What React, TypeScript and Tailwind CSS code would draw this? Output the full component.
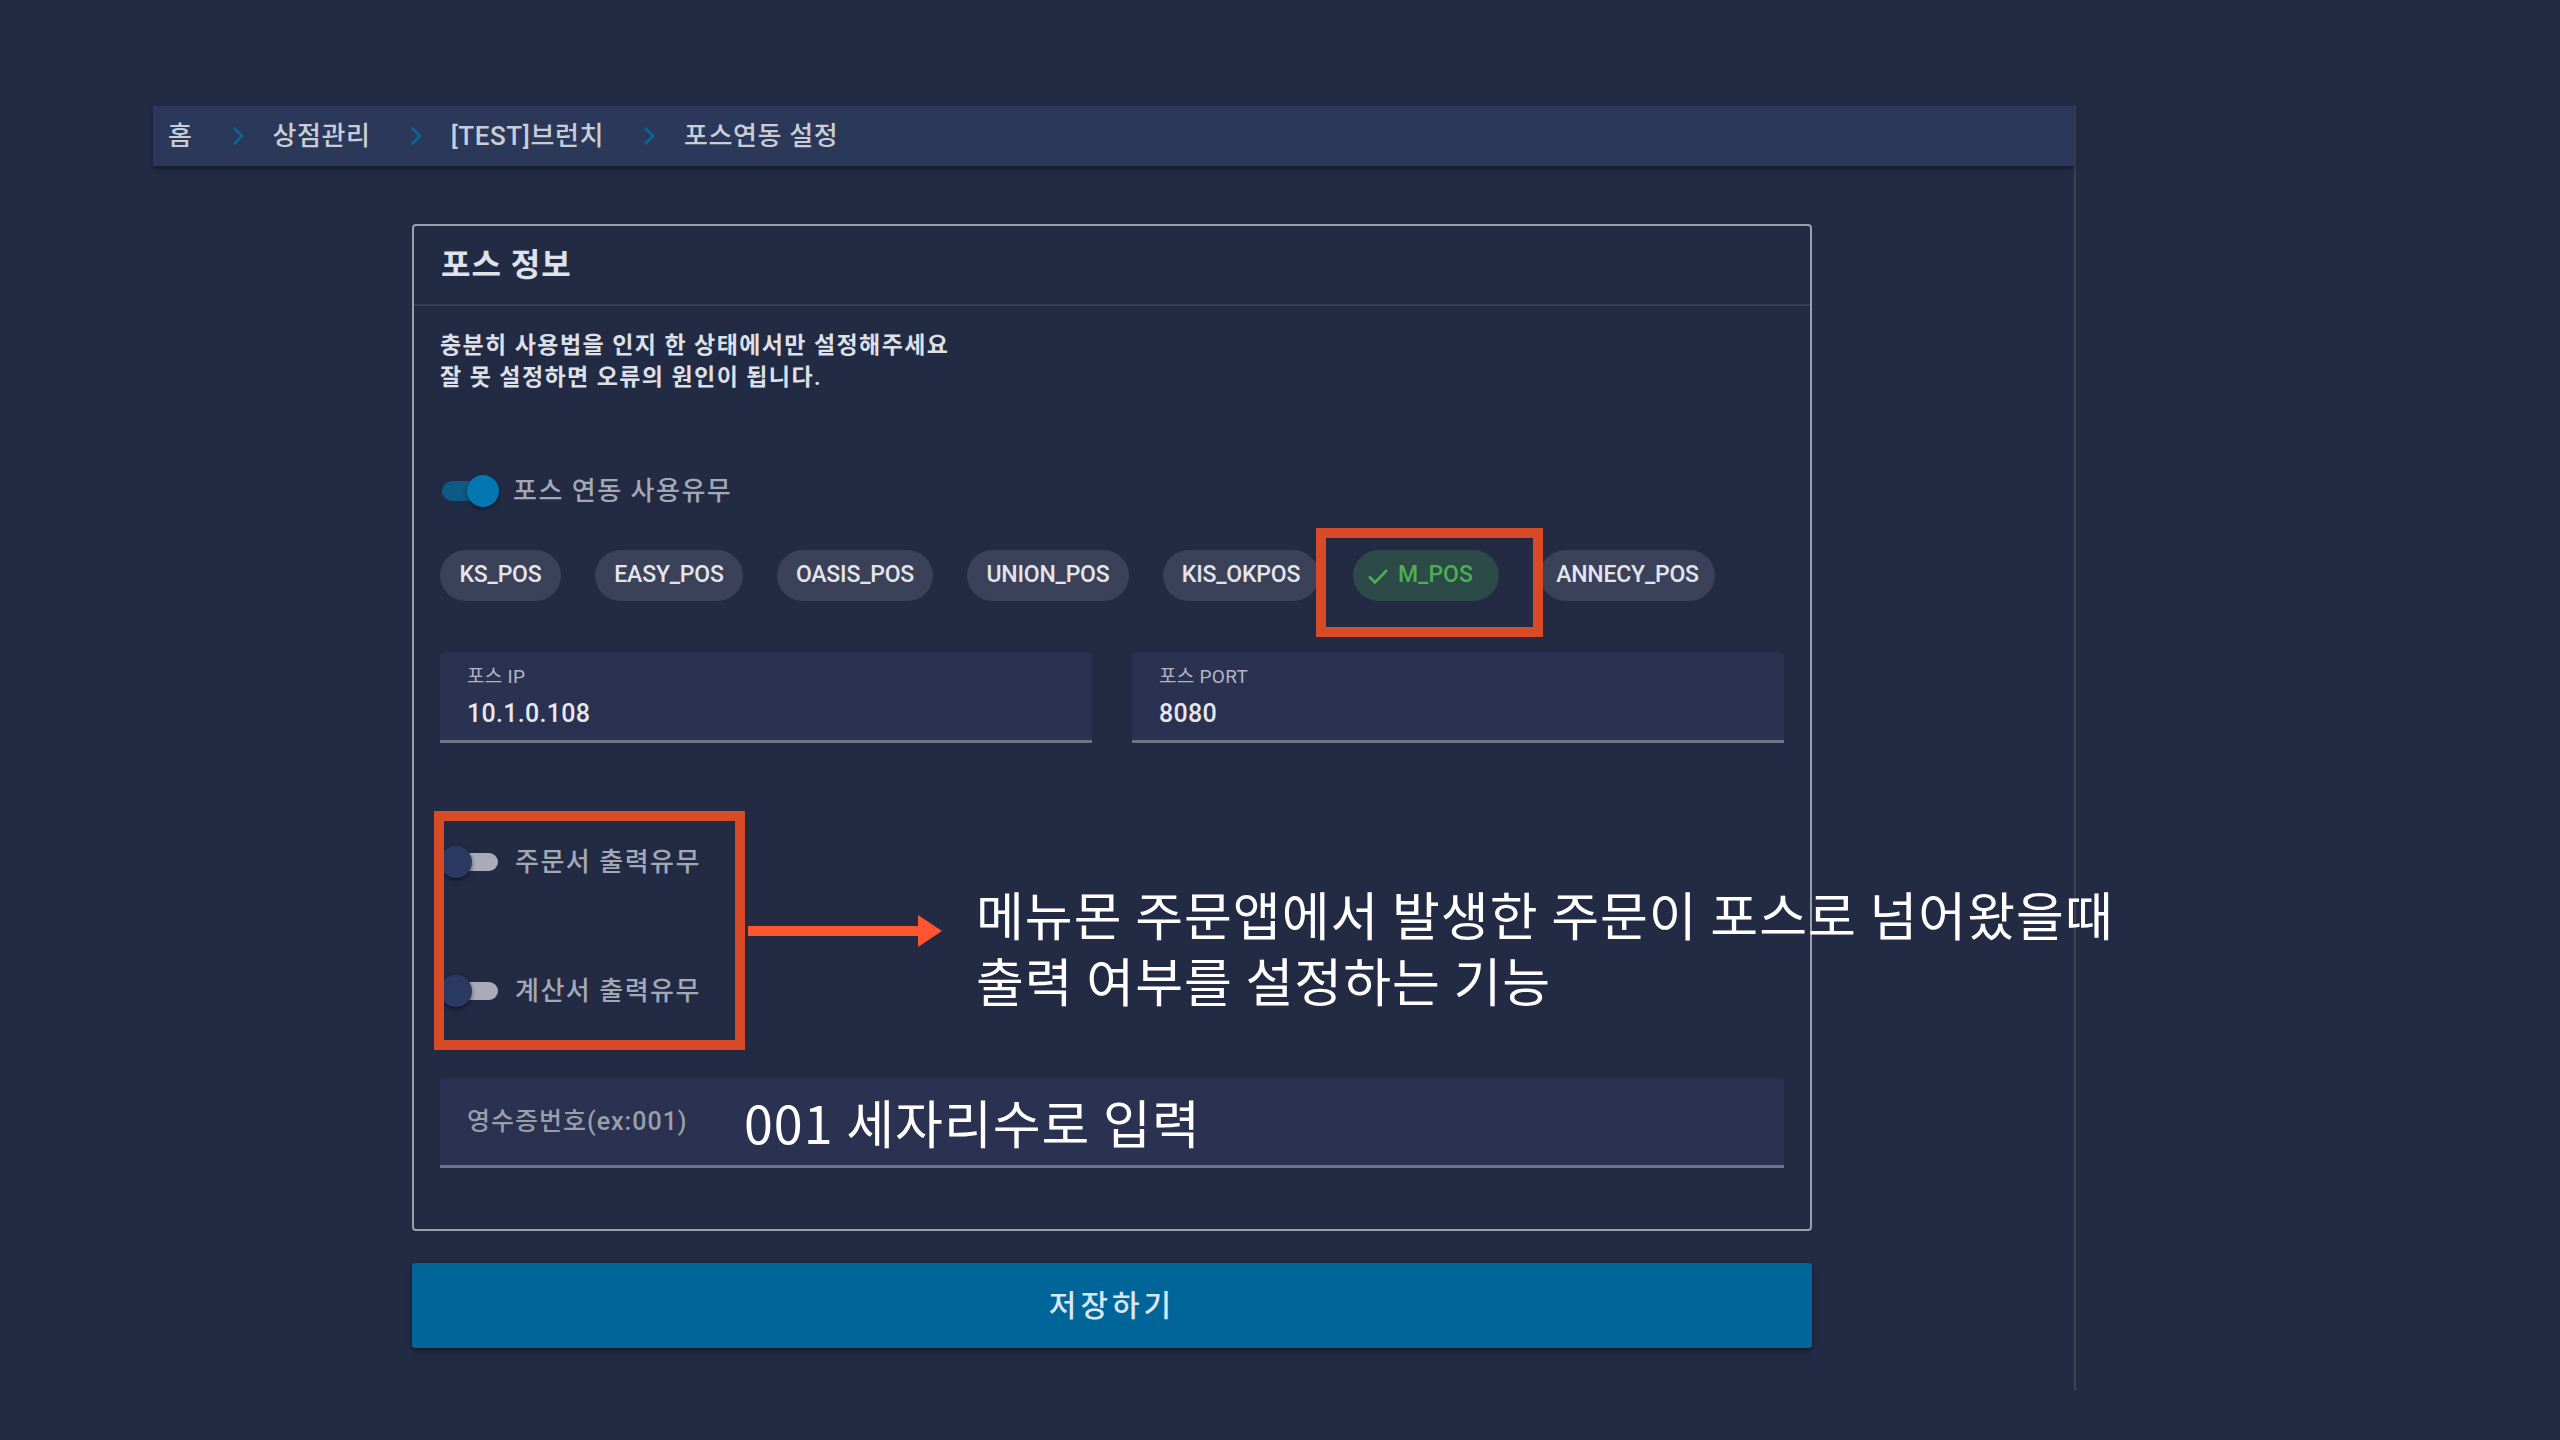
import React from "react";

const FONT = { fontFamily: 'Roboto, "Noto Sans CJK KR", sans-serif' };
const ANNO = { fontFamily: '"Noto Sans CJK KR", "Noto Sans", sans-serif' };

const crumbs = ["홈", "상점관리", "[TEST]브런치", "포스연동 설정"];

// chip widths read off the screenshot
const posList: { name: string; w: string }[] = [
  { name: "KS_POS", w: "w-[121px]" },
  { name: "EASY_POS", w: "w-[148px]" },
  { name: "OASIS_POS", w: "w-[156px]" },
  { name: "UNION_POS", w: "w-[162px]" },
  { name: "KIS_OKPOS", w: "w-[156px]" },
  { name: "M_POS", w: "w-[146px]" },
  { name: "ANNECY_POS", w: "w-[175px] ml-[7px]" },
];

function Chevron() {
  return (
    <svg width="14" height="22" viewBox="0 0 14 22" className="ml-[38px] mr-[28px]">
      <path d="M3 3 L11 11 L3 19" fill="none" stroke="#0a6796" strokeWidth="2.6" />
    </svg>
  );
}

function Toggle({ on }: { on: boolean }) {
  return (
    <div className="relative h-[34px] w-[62px] shrink-0">
      {on ? (
        <>
          <div className="absolute left-[2px] top-[7px] h-[20px] w-[52px] rounded-full bg-[#0c5a85]" />
          <div className="absolute left-[27px] top-[1px] h-[32px] w-[32px] rounded-full bg-[#0277b0] shadow-[0_2px_4px_rgba(0,0,0,0.45)]" />
        </>
      ) : (
        <>
          <div className="absolute left-[6px] top-[8px] h-[18px] w-[52px] rounded-full bg-[#a8abb8]" />
          <div className="absolute left-[0px] top-[1px] h-[32px] w-[32px] rounded-full bg-[#2b3a62] shadow-[0_2px_4px_rgba(0,0,0,0.5)]" />
        </>
      )}
    </div>
  );
}

function Field({ label, value }: { label: string; value: string }) {
  return (
    <div className="flex h-[91px] flex-col justify-center rounded-t-[4px] border-b-[3px] border-[#6f7485] bg-[#2b3150] pl-[27px] pt-[2px]">
      <span className="text-[19px] leading-[22px] tracking-[0.3px] text-[#b3b6c2]">{label}</span>
      <span className="mt-[12px] text-[25px] font-medium leading-[28px] tracking-[0.3px] text-[#e6e8ee]">{value}</span>
    </div>
  );
}

export default function App() {
  return (
    <div className="relative h-[1440px] w-[2560px] overflow-hidden bg-[#232a44]" style={FONT}>
      <div className="ml-[153px] mt-[106px] h-[1284px] w-[1923px] border-r-2 border-[#3c4152]">
        {/* breadcrumb */}
        <div className="flex h-[60px] items-center bg-[#2c3859] pl-[15px] text-[26px] font-medium tracking-[0.6px] text-[#c9cdd6] shadow-[0_3px_4px_rgba(0,0,0,0.35)]">
          {crumbs.map((c, i) => (
            <React.Fragment key={c}>
              {i > 0 && <Chevron />}
              <span>{c}</span>
            </React.Fragment>
          ))}
        </div>

        <div className="ml-[259px] mt-[58px] w-[1400px]">
          {/* card */}
          <div className="rounded-[4px] border-2 border-[#9ba0ad]">
            <div className="flex h-[80px] items-center border-b-2 border-[#363d57] pl-[27px] text-[32px] font-semibold tracking-[1px] text-[#dfe2e9]">
              포스 정보
            </div>
            <div className="flex flex-col px-[26px] pb-[61px] pt-[24px]">
              <p className="text-[23px] font-semibold leading-[32px] tracking-[1.4px] text-[#dde0e7]">
                충분히 사용법을 인지 한 상태에서만 설정해주세요
                <br />
                잘 못 설정하면 오류의 원인이 됩니다.
              </p>

              <div className="mt-[77px] flex h-[40px] items-center gap-[11px]">
                <Toggle on />
                <span className="text-[26px] font-medium tracking-[1.5px] text-[#a3a8b5]">포스 연동 사용유무</span>
              </div>

              <div className="mt-[39px] flex gap-[34px]">
                {posList.map(({ name, w }) =>
                  name === "M_POS" ? (
                    <div key={name} className={`flex h-[51px] items-center gap-[8px] rounded-full bg-[#2b4a48] pl-[13px] text-[23px] font-medium text-[#4caf50] ${w}`}>
                      <svg width="24" height="24" viewBox="0 0 24 24">
                        <path d="M3 12.5 L9 18.5 L21 6" fill="none" stroke="#4caf50" strokeWidth="2.6" />
                      </svg>
                      {name}
                    </div>
                  ) : (
                    <div key={name} className={`flex h-[51px] items-center justify-center whitespace-nowrap rounded-full bg-[#3b4159] text-[23px] font-medium tracking-[-0.2px] text-[#e3e5eb] ${w}`}>
                      {name}
                    </div>
                  )
                )}
              </div>

              <div className="mt-[51px] grid grid-cols-2 gap-[40px]">
                <Field label="포스 IP" value="10.1.0.108" />
                <Field label="포스 PORT" value="8080" />
              </div>

              <div className="mt-[99px] flex h-[40px] items-center gap-[13px]">
                <Toggle on={false} />
                <span className="text-[26px] font-medium tracking-[1.5px] text-[#a3a8b5]">주문서 출력유무</span>
              </div>
              <div className="mt-[89px] flex h-[40px] items-center gap-[13px]">
                <Toggle on={false} />
                <span className="text-[26px] font-medium tracking-[1.5px] text-[#a3a8b5]">계산서 출력유무</span>
              </div>

              <div className="mt-[67px] flex h-[90px] items-center rounded-t-[4px] border-b-[3px] border-[#6f7485] bg-[#2b3150] pl-[27px]">
                <span className="w-[277px] text-[25px] font-medium tracking-[1px] text-[#9a9eab]">영수증번호(ex:001)</span>
                <span className="text-[52px] leading-none tracking-[1px] text-white" style={ANNO}>
                  001 세자리수로 입력
                </span>
              </div>
            </div>
          </div>

          <button className="mt-[32px] flex h-[85px] w-full items-center justify-center rounded-[3px] bg-[#00669a] text-[30px] font-medium tracking-[4px] text-[#d8e6f1] shadow-[0_3px_5px_rgba(0,0,0,0.4)]">
            저장하기
          </button>
        </div>
      </div>

      {/* annotations */}
      <div className="absolute left-[1316px] top-[528px] h-[109px] w-[227px] border-[10px] border-[#d94a26]" />
      <div className="absolute left-[434px] top-[811px] h-[239px] w-[311px] border-[10px] border-[#d94a26]" />
      <svg className="absolute left-[748px] top-[912px]" width="196" height="38" viewBox="0 0 196 38">
        <path d="M0 14 H170 V3 L194 19 L170 35 V24 H0 Z" fill="#ff5530" />
      </svg>
      <div className="absolute left-[976px] top-[881px] text-[52px] leading-[66px] tracking-[1px] text-white" style={ANNO}>
        메뉴몬 주문앱에서 발생한 주문이 포스로 넘어왔을때
        <br />
        출력 여부를 설정하는 기능
      </div>
    </div>
  );
}
